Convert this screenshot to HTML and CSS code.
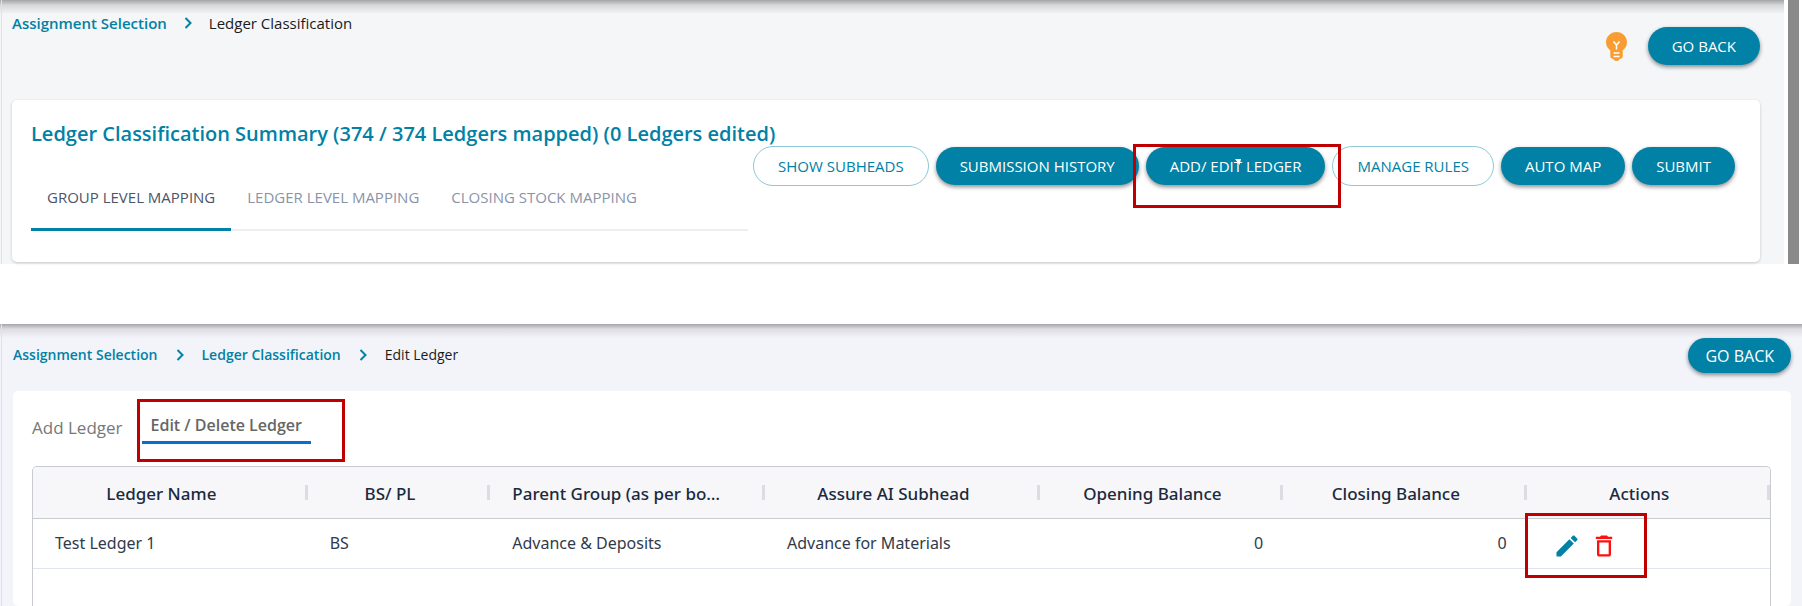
FILE: index.html
```
<!DOCTYPE html>
<html lang="en">
<head>
<meta charset="utf-8">
<title>Ledger Classification</title>
<link rel="stylesheet" href="styles.css">
</head>
<body>
<section class="screen screen-summary">
  <div class="rail"></div>
  <div class="content">
    <header class="topbar">
      <nav class="crumbs" aria-label="Breadcrumb">
        <a class="crumb-link" href="#">Assignment Selection</a>
        <svg class="chevron" viewBox="0 0 8 12" aria-hidden="true"><path d="M1.5 1l5 5-5 5"/></svg>
        <span>Ledger Classification</span>
      </nav>
      <div class="topbar-actions">
        <svg class="bulb" viewBox="0 0 21 29" aria-hidden="true">
          <path fill="#f99d33" d="M10.500 0C4.700 0 0 4.600 0 10.300c0 3.600 1.800 6.200 4.300 8.200v5.800c0 1 .5 1.700 1.400 2.100l2 .8c.3 1.100 1.400 1.800 2.800 1.800s2.500-.7 2.800-1.800l2-.8c.9-.4 1.400-1.100 1.400-2.100v-5.800c2.500-2 4.300-4.600 4.300-8.200C21 4.600 16.300 0 10.500 0z"/>
          <path fill="none" stroke="#fff" stroke-width="1.500" d="M7.500 9.500l3 3.500 3-3.500M10.500 13v4.500M7.500 21h6M7.500 24.500h6"/>
        </svg>
        <button class="btn btn-solid" type="button">GO BACK</button>
      </div>
    </header>
    <main class="card summary-card">
      <div class="summary-main">
        <h1 class="summary-title">Ledger Classification Summary (374 / 374 Ledgers mapped) (0 Ledgers edited)</h1>
        <div class="tabs" role="tablist">
          <button class="tab tab-active" type="button" role="tab" aria-selected="true">GROUP LEVEL MAPPING</button>
          <button class="tab" type="button" role="tab" aria-selected="false">LEDGER LEVEL MAPPING</button>
          <button class="tab" type="button" role="tab" aria-selected="false">CLOSING STOCK MAPPING</button>
        </div>
      </div>
      <div class="summary-actions">
        <button class="btn btn-outline" type="button">SHOW SUBHEADS</button>
        <button class="btn btn-solid" type="button">SUBMISSION HISTORY</button>
        <div class="marked marked-add">
          <button class="btn btn-solid" type="button">ADD/ EDIT LEDGER</button>
          <svg class="cursor" viewBox="0 0 6 9" aria-hidden="true"><path d="M0 0h6L4.500 6z"/></svg>
        </div>
        <button class="btn btn-outline" type="button">MANAGE RULES</button>
        <button class="btn btn-solid" type="button">AUTO MAP</button>
        <button class="btn btn-solid" type="button">SUBMIT</button>
      </div>
    </main>
  </div>
  <div class="scrollbar"></div>
</section>

<section class="screen screen-edit">
  <div class="rail"></div>
  <div class="content">
    <header class="topbar">
      <nav class="crumbs" aria-label="Breadcrumb">
        <a class="crumb-link" href="#">Assignment Selection</a>
        <svg class="chevron" viewBox="0 0 8 12" aria-hidden="true"><path d="M1.5 1l5 5-5 5"/></svg>
        <a class="crumb-link" href="#">Ledger Classification</a>
        <svg class="chevron" viewBox="0 0 8 12" aria-hidden="true"><path d="M1.5 1l5 5-5 5"/></svg>
        <span>Edit Ledger</span>
      </nav>
      <button class="btn btn-solid" type="button">GO BACK</button>
    </header>
    <main class="card edit-card">
      <div class="modes" role="tablist">
        <button class="mode" type="button" role="tab" aria-selected="false">Add Ledger</button>
        <div class="marked marked-mode">
          <button class="mode mode-active" type="button" role="tab" aria-selected="true">Edit / Delete Ledger</button>
        </div>
      </div>
      <div class="grid-frame">
        <table class="grid">
          <colgroup>
            <col class="col-wide"><col class="col-type"><col class="col-wide"><col class="col-wide">
            <col class="col-money"><col class="col-money"><col class="col-money">
          </colgroup>
          <thead>
            <tr>
              <th scope="col">Ledger Name</th>
              <th scope="col">BS/ PL</th>
              <th scope="col">Parent Group (as per books)</th>
              <th scope="col">Assure AI Subhead</th>
              <th scope="col">Opening Balance</th>
              <th scope="col">Closing Balance</th>
              <th scope="col">Actions</th>
            </tr>
          </thead>
          <tbody>
            <tr>
              <td>Test Ledger 1</td>
              <td>BS</td>
              <td>Advance &amp; Deposits</td>
              <td>Advance for Materials</td>
              <td class="number">0</td>
              <td class="number">0</td>
              <td class="actions">
                <div class="marked marked-actions">
                  <button class="icon-btn" type="button" aria-label="Edit"><svg viewBox="0 0 24 24"><path fill="#0081a5" d="M3 17.250V21h3.750L17.810 9.940l-3.750-3.750L3 17.250zM20.710 7.040c.39-.39.39-1.020 0-1.410l-2.340-2.340c-.39-.39-1.020-.39-1.410 0l-1.830 1.830 3.750 3.750 1.830-1.830z"/></svg></button>
                  <button class="icon-btn" type="button" aria-label="Delete"><svg viewBox="0 0 24 24"><path fill="#ff0f0f" d="M6 19c0 1.100.9 2 2 2h8c1.100 0 2-.9 2-2V7H6v12zM8 9h8v10H8V9zm7.500-5l-1-1h-5l-1 1H5v2h14V4z"/></svg></button>
                </div>
              </td>
            </tr>
          </tbody>
        </table>
      </div>
    </main>
  </div>
</section>
</body>
</html>
```
FILE: styles.css
```
* { box-sizing: border-box; }

body {
  margin: 0;
  min-height: 100vh;
  display: flex;
  flex-direction: column;
  gap: 60px;
  background: #fff;
  color: #1b1b1b;
  font-family: "Open Sans", "Noto Sans", sans-serif;
  font-size: 15px;
  line-height: 20px;
}

button { font: inherit; color: inherit; background: none; border: 0; padding: 0; cursor: pointer; }

.screen { display: flex; }
.screen-summary { background: linear-gradient(#a3a4a6, #d5d6d8 5px, #f4f6f8 14px); }
.screen-edit { flex: 1; background: linear-gradient(#a5a5a9, #dcdce2 5px, #f3f4fa 14px); }

.rail { width: 2px; border-right: 1px solid #dfe2e5; }
.content { flex: 1; min-width: 0; display: flex; flex-direction: column; }
.scrollbar { width: 18px; border: solid #fff; border-width: 0 3px 0 4px; background: #8a8a8a; }

.topbar { display: flex; justify-content: space-between; align-items: flex-start; }
.crumbs { display: flex; align-items: center; }
.crumb-link { color: #0081a5; font-weight: 600; text-decoration: none; }
.chevron { width: 8px; height: 12px; margin: 0 17px; fill: none; stroke: #0081a5; stroke-width: 2; }

.btn { height: 38px; padding: 0 24px 1px; border-radius: 20px; white-space: nowrap; }
.btn-solid { background: #0081a5; color: #fff; box-shadow: 0 2px 4px rgba(0, 0, 0, .45); }
.btn-outline { height: 40px; border: 1px solid #8cc8d8; background: #fff; color: #0081a5; }

.card { background: #fff; border-radius: 5px; }

.screen-summary .content { padding: 0 24px 2px 10px; }
.screen-summary .topbar { height: 100px; }
.screen-summary .crumbs { padding-top: 13px; }
.topbar-actions { display: flex; align-items: center; gap: 21px; padding-top: 27px; }
.bulb { width: 21px; height: 29px; }

.summary-card {
  display: flex;
  min-height: 162px;
  padding: 0 25px 0 19px;
  box-shadow: 0 1px 3px rgba(0, 0, 0, .2);
}
.summary-main { flex: 1; min-width: 0; padding-top: 21px; }
.summary-title { margin: 0; color: #0081a5; font-size: 20px; line-height: 26px; font-weight: 600; white-space: nowrap; }
.tabs { display: flex; margin-top: 24px; border-bottom: 2px solid #eee; }
.tab { height: 60px; margin-bottom: -2px; padding: 0 16px 5px; border-bottom: 3px solid transparent; color: #8a94a8; white-space: nowrap; }
.tab-active { border-color: #0081a5; color: #4a5568; }
.summary-actions { display: flex; align-items: center; align-self: flex-start; gap: 7px; margin-left: 5px; padding-top: 46px; }

.marked { position: relative; }
.marked::after { content: ""; position: absolute; border: 3px solid #c00000; pointer-events: none; }
.marked-add::after { inset: -3px -16px -23px -13px; }
.cursor { position: absolute; left: 89px; top: 12px; width: 6px; height: 9px; fill: #fff; }

.screen-edit .content { padding: 0 11px; }
.screen-edit .topbar { height: 67px; padding-top: 14px; }
.screen-edit .crumbs { padding-top: 7px; font-size: 14px; }
.screen-edit .btn { height: 35px; padding: 0 17px; font-size: 16px; }
.screen-edit .chevron { margin: 0 18px; }

.edit-card { flex: 1; display: flex; flex-direction: column; padding: 0 20px 0 19px; font-size: 17px; }
.modes { display: flex; align-items: flex-start; gap: 19px; height: 75px; padding-top: 20px; color: #777; }
.mode { height: 33px; }
.mode-active { padding: 0 9px 3px; border-bottom: 3px solid #0a6ed1; font-size: 16px; font-weight: 600; color: #666; }
.marked-mode::after { inset: -12px -34px -18px -5px; }

.grid-frame { flex: 1; border: 1px solid #c8ccd0; border-bottom: 0; border-radius: 5px 5px 0 0; overflow: hidden; }
.grid { width: 100%; table-layout: fixed; border-collapse: collapse; font-family: "Noto Sans", "Open Sans", sans-serif; font-size: 16px; color: #2f3b4c; }
.col-wide { width: 15.8%; }
.col-type { width: 10.5%; }
.col-money { width: 14%; }
.grid th {
  height: 51px;
  padding: 3px 40px 0 22px;
  border-bottom: 1px solid #c8ccd0;
  background: linear-gradient(#dcdde2, #dcdde2) right 0 center / 3px 15px no-repeat #f7f7fa;
  color: #1b2a3d;
  font-size: 17px;
  font-weight: 500;
  overflow: hidden;
  text-overflow: ellipsis;
  white-space: nowrap;
}
.grid td { height: 50px; padding: 0 20px 0 22px; border-bottom: 1px solid #dfe4ee; white-space: nowrap; }
.grid .number { text-align: right; }
.grid .actions { padding: 5px 0 0 26px; }
.marked-actions { display: inline-flex; gap: 9px; vertical-align: middle; }
.marked-actions::after { inset: -19px -29px -18px -28px; }
.icon-btn { width: 28px; height: 28px; }
.icon-btn svg { display: block; width: 28px; height: 28px; }
```
